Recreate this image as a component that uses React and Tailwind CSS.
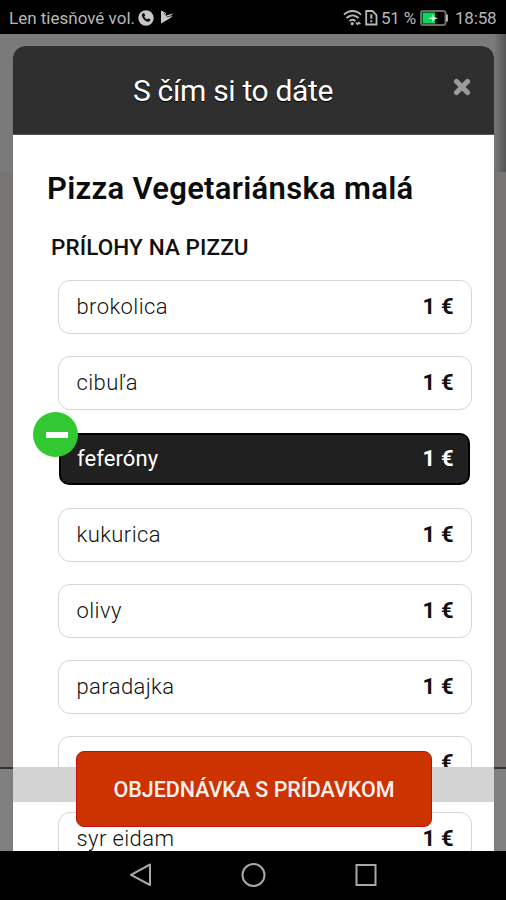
import clsx from "clsx";

const toppings = [
  { name: "brokolica", price: "1 €" },
  { name: "cibuľa", price: "1 €" },
  { name: "feferóny", price: "1 €", selected: true },
  { name: "kukurica", price: "1 €" },
  { name: "olivy", price: "1 €" },
  { name: "paradajka", price: "1 €" },
  { name: "", price: "€" },
  { name: "syr eidam", price: "1 €" },
];

function StatusBar() {
  return (
    <header className="h-[34px] shrink-0 bg-black text-[#b8b8b8] flex items-center text-[17px] leading-none whitespace-nowrap">
      <span className="ml-[9px] w-[126px] mt-[3px]">Len tiesňové vol.</span>
      <svg className="ml-[3px] mt-px" width="16" height="16" viewBox="0 0 16 16">
        <circle cx="8" cy="8" r="7.7" fill="#c8c8c8" />
        <path
          d="M4.600 3.600c.7-.8 1.500-.8 2 .2l.5 1.100c.2.6-.5 1-.8 1.500.5 1.300 1.600 2.400 2.900 2.900.5-.4.9-1.100 1.500-.8l1.300.8c.8.5.6 1.200-.1 1.800-1.200 1-2.800.8-4.600-.4C5.500 9.400 4 7.400 3.800 5.600c0-.8.2-1.500.8-2z"
          fill="#111"
        />
      </svg>
      <svg className="ml-[6px]" width="14" height="14" viewBox="0 0 14 14">
        <path d="M1 .5l5 2.500v2.500L13 3.500 10.500 6.500l2.500-.3L8 9.500 1 13.500z" fill="#c8c8c8" />
        <path d="M4 3l3.500 4 5-1.800" stroke="#222" strokeWidth=".8" fill="none" />
      </svg>
      <div className="ml-auto mr-[10px] flex items-center">
        <svg width="20" height="17" viewBox="0 0 20 17" fill="none" stroke="#b8b8b8" strokeWidth="2">
          <path d="M1 5.600C6 .8 13 .8 18 5.600M3.500 9c3.600-3.400 8.400-3.400 12 0M6.500 12c2-1.700 4-1.700 6 0" />
          <circle cx="9.200" cy="14.700" r="1.600" fill="#b8b8b8" stroke="none" />
          <path d="M13 13.500l1.400 1.700 1.400-1.700 1.600 1.700" strokeWidth="1.500" />
        </svg>
        <svg className="ml-[2px]" width="13" height="17" viewBox="0 0 13 17" fill="none" stroke="#b8b8b8" strokeWidth="1.800">
          <path d="M1.200 2h6.300l4 4v9.500H1.200z" />
          <path d="M6.300 5.300v4.500M6.300 11.300v2" strokeWidth="2" />
        </svg>
        <span className="ml-[3px] w-[36px] mt-[2px] tracking-[-0.2px]">51 %</span>
        <svg className="ml-[3px] mt-px" width="29" height="16" viewBox="0 0 29 16">
          <rect x="1" y="1" width="24.500" height="14" rx="2" fill="none" stroke="#6a6a6a" strokeWidth="2" />
          <rect x="2.500" y="2.500" width="12.500" height="11" fill="#0bd65a" />
          <path d="M26 4.500h1.800v7H26z" fill="#c8c8c8" />
          <path d="M8 8.200l4.500-1V4.200l2 3 3.700 1-3.700 1.100-2 3V9.200z" fill="#f0fff5" />
        </svg>
        <span className="ml-[6px] w-[41px] mt-[3px] tracking-[-0.2px]">18:58</span>
      </div>
    </header>
  );
}

function Backdrop() {
  return (
    <div className="absolute inset-0 flex flex-col">
      <div className="h-[138px] bg-[#7a7a7a] flex justify-end">
        <div className="w-[12px] bg-linear-to-r from-[#7a7a7a] to-[#555]" />
      </div>
      <div className="h-[595px] bg-[#777573]" />
      <div className="h-[2px] bg-[#333]" />
      <div className="flex-1 bg-[#808080]" />
    </div>
  );
}

function Topping({ name, price, selected }) {
  return (
    <li
      className={clsx(
        "relative shrink-0 flex items-center justify-between text-[22px]",
        selected
          ? "my-px ml-px mr-[2px] h-[52px] pl-[16px] pr-[14px] rounded-[10px] bg-[#202020] border-2 border-black text-white"
          : "h-[54px] pl-[17.500px] pr-[17px] rounded-[12px] bg-white border-[1.500px] border-[#d6d6d6] text-[#111]"
      )}
    >
      <span className={clsx("-mt-[2px]", selected ? "tracking-[0.1px]" : "font-light tracking-[0.400px]")}>{name}</span>
      <span className="-mt-[2px] font-bold tracking-[0.300px]">{price}</span>
      {selected && (
        <span className="absolute -left-[28px] -top-[23px] size-[45px] rounded-full bg-[#32c832] flex items-center justify-center">
          <span className="w-[22px] h-[6px] ml-[2px] mt-px bg-white" />
        </span>
      )}
    </li>
  );
}

export default function App() {
  return (
    <div className="w-[506px] h-[900px] flex flex-col overflow-hidden bg-black font-['Roboto',sans-serif]">
      <StatusBar />
      <main className="relative h-[817px] shrink-0 overflow-hidden">
        <Backdrop />
        <section className="relative ml-[13px] mt-[12px] w-[481px] h-[805px] rounded-t-[12px] bg-white shadow-[0_1px_1px_0px_#4a4a4a]">
          <div className="h-[89px] rounded-t-[12px] bg-[#2f2f2f] border-b border-[#555] flex items-center justify-between">
            <h1 className="ml-[120px] mt-[2px] text-white text-[30px] leading-none tracking-[-0.330px] whitespace-nowrap [text-shadow:0_1px_1px_#000]">
              S čím si to dáte
            </h1>
            <button className="mr-[23px] mb-[6px]" aria-label="Zavrieť">
              <svg width="18" height="18" viewBox="0 0 18 18" stroke="#9a9a9a" strokeWidth="5.200" strokeLinecap="round">
                <path d="M3.500 3.500l11 11M14.500 3.500l-11 11" />
              </svg>
            </button>
          </div>
          <h2 className="mt-[35px] ml-[34px] h-[38px] leading-[38px] text-[31px] font-semibold tracking-[0.300px] text-[#0c0c0c] whitespace-nowrap">
            Pizza Vegetariánska malá
          </h2>
          <h3 className="mt-[24px] ml-[38px] h-[30px] leading-[30px] text-[22.500px] font-medium tracking-[0.100px] text-[#111] whitespace-nowrap">
            PRÍLOHY NA PIZZU
          </h3>
          <ul className="mt-[18px] ml-[45px] w-[414px] h-[571px] overflow-y-clip flex flex-col gap-[22px]">
            {toppings.map((t, i) => (
              <Topping key={i} {...t} />
            ))}
          </ul>
        </section>
        <div className="absolute left-[13px] top-[733px] w-[481px] h-[35px] bg-[#d3d3d3]" />
        <button className="absolute left-[76px] top-[717px] w-[356px] h-[76px] pt-[3px] rounded-[8px] bg-[#cc3300] border border-[#c41010] text-[#fff0f0] text-[21.500px] font-medium tracking-[-0.050px] whitespace-nowrap">
          OBJEDNÁVKA S PRÍDAVKOM
        </button>
      </main>
      <nav className="h-[49px] pb-px flex items-center justify-center gap-[88px]">
        <svg width="24" height="26" viewBox="0 0 24 26" fill="none" stroke="#a8a8a8" strokeWidth="2">
          <path d="M22 2.500v20.500L3 12.800z" strokeLinejoin="round" />
        </svg>
        <svg width="26" height="26" viewBox="0 0 26 26" fill="none" stroke="#a8a8a8" strokeWidth="2">
          <circle cx="13.500" cy="13" r="11" />
        </svg>
        <svg width="24" height="24" viewBox="0 0 24 24" fill="none" stroke="#a8a8a8" strokeWidth="2">
          <path d="M2.500 2h19v20h-19z" />
        </svg>
      </nav>
    </div>
  );
}
